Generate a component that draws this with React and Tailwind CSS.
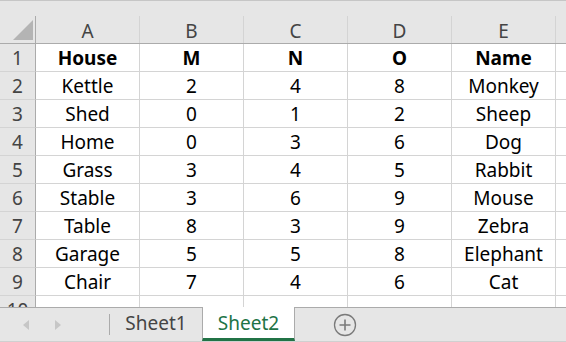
import React from 'react';

const cols = ['A', 'B', 'C', 'D', 'E'];
const rows = [
  ['House', 'M', 'N', 'O', 'Name'],
  ['Kettle', '2', '4', '8', 'Monkey'],
  ['Shed', '0', '1', '2', 'Sheep'],
  ['Home', '0', '3', '6', 'Dog'],
  ['Grass', '3', '4', '5', 'Rabbit'],
  ['Stable', '3', '6', '9', 'Mouse'],
  ['Table', '8', '3', '9', 'Zebra'],
  ['Garage', '5', '5', '8', 'Elephant'],
  ['Chair', '7', '4', '6', 'Cat'],
  ['', '', '', '', ''],
];

const gridCols = 'grid grid-cols-[36px_104px_104px_104px_104px_104px_1fr]';

function App() {
  return (
    <div className="w-[566px] h-[342px] overflow-hidden bg-white flex flex-col font-['Noto_Sans','Open_Sans',sans-serif] text-[19px]">
      <div className="h-[16px] shrink-0 bg-[#e6e6e6] border-t border-[#c6c6c6]" />
      <div className={`${gridCols} h-[28px] shrink-0 bg-[#e6e6e6] border-b border-[#ababab]`}>
        <div className="relative border-r border-[#ababab]">
          <svg className="absolute left-[13px] top-[4px]" width="20" height="20" viewBox="0 0 20 20">
            <polygon points="0,20 20,0 20,20" fill="#b4b4b4" />
          </svg>
        </div>
        {cols.map((c) => (
          <div key={c} className="flex items-center justify-center border-r border-[#d4d4d4] text-[#444] leading-none pt-[3px]">
            {c}
          </div>
        ))}
        <div />
      </div>
      <div className="flex-1 overflow-hidden">
        {rows.map((r, i) => (
          <div key={i} className={`${gridCols} h-[28px]`}>
            <div className="flex items-center justify-center bg-[#e6e6e6] border-r border-[#ababab] border-b border-b-[#d4d4d4] text-[#444] leading-none pt-[2px]">
              {i + 1}
            </div>
            {r.map((v, j) => (
              <div
                key={j}
                className={`flex items-center justify-center border-r border-b border-[#d4d4d4] text-black leading-none pt-[2px] ${i === 0 ? 'font-bold' : ''}`}
              >
                {v}
              </div>
            ))}
            <div className="border-b border-[#d4d4d4]" />
          </div>
        ))}
      </div>
      <div className="h-[35px] shrink-0 bg-[#e6e6e6] border-t border-[#ababab] border-b border-b-[#d0d0d0] flex items-stretch">
        <div className="w-[110px] flex items-center gap-[24px] pl-[22px] border-r border-[#ababab] my-[6px]">
          <svg width="8" height="12" viewBox="0 0 8 12"><polygon points="7,1 1,6 7,11" fill="#c6c6c6" /></svg>
          <svg width="8" height="12" viewBox="0 0 8 12"><polygon points="1,1 7,6 1,11" fill="#c6c6c6" /></svg>
        </div>
        <div className="w-[92px] flex items-center justify-center text-[#444] pb-[2px]">Sheet1</div>
        <div className="w-[93px] -mt-[1px] bg-white border-x border-[#ababab] border-b-[3px] border-b-[#217346] flex items-center justify-center text-[#217346] pt-[1px]">
          Sheet2
        </div>
        <div className="flex items-center pl-[38px]">
          <svg width="24" height="24" viewBox="0 0 24 24">
            <circle cx="12" cy="12" r="10.5" fill="none" stroke="#7a7a7a" strokeWidth="1.3" />
            <path d="M12 6.5v11M6.5 12h11" stroke="#7a7a7a" strokeWidth="1.6" />
          </svg>
        </div>
      </div>
    </div>
  );
}

export default App;
